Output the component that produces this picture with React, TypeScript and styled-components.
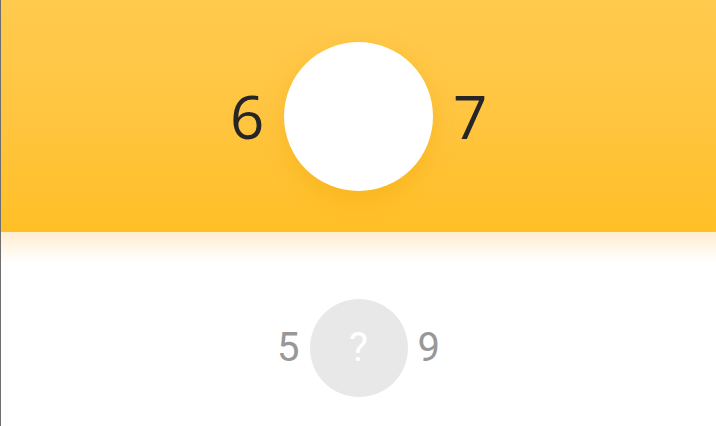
import React from "react";
import styled, { createGlobalStyle } from "styled-components";

const Global = createGlobalStyle`
  html, body { margin: 0; padding: 0; background: #ffffff; }
  #root { min-height: 100vh; }
`;

const Page = styled.div`
  min-height: 100vh;
  box-sizing: border-box;
  border-left: 1px solid #6e6e6e;
  background: #ffffff;
  display: flex;
  flex-direction: column;
`;

const Header = styled.div`
  height: 232px;
  background: linear-gradient(180deg, #ffca4e 0%, #ffc540 50%, #ffbf26 100%);
  display: flex;
  align-items: center;
  justify-content: center;
  gap: 20px;
`;

const Fade = styled.div`
  height: 30px;
  background: linear-gradient(180deg, #ffedcf 0%, #fff6e8 50%, #ffffff 100%);
`;

const BigNumber = styled.span`
  font-family: "Open Sans", "Noto Sans", sans-serif;
  font-size: 60px;
  line-height: 1;
  color: #262626;
  width: 34px;
  text-align: center;
`;

const BigCircle = styled.div`
  width: 149px;
  height: 149px;
  border-radius: 50%;
  background: #ffffff;
  box-shadow: 0 8px 22px rgba(235, 160, 0, 0.35);
`;

const QuizRow = styled.div`
  margin-top: 37px;
  display: flex;
  align-items: center;
  justify-content: center;
  gap: 10px;
`;

const SmallNumber = styled.span<{ $light?: boolean }>`
  font-family: Roboto, "Liberation Sans", sans-serif;
  font-size: 40px;
  line-height: 1;
  color: ${(p) => (p.$light ? "#ffffff" : "#989898")};
`;

const SmallCircle = styled.div`
  width: 98px;
  height: 98px;
  border-radius: 50%;
  background: #e8e8e8;
  display: flex;
  align-items: center;
  justify-content: center;
`;

export default function App() {
  return (
    <>
      <Global />
      <Page>
        <Header>
          <BigNumber>6</BigNumber>
          <BigCircle />
          <BigNumber>7</BigNumber>
        </Header>
        <Fade />
        <QuizRow>
          <SmallNumber>5</SmallNumber>
          <SmallCircle>
            <SmallNumber $light>?</SmallNumber>
          </SmallCircle>
          <SmallNumber>9</SmallNumber>
        </QuizRow>
      </Page>
    </>
  );
}
